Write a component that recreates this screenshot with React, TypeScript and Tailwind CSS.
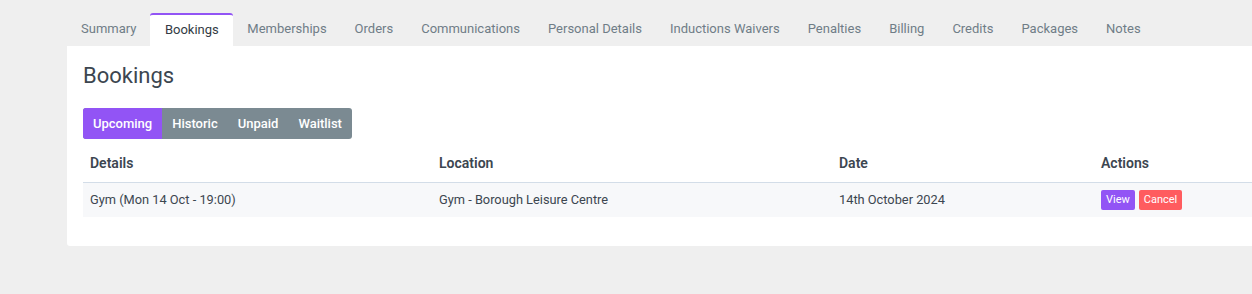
const tabs = [
  "Summary",
  "Bookings",
  "Memberships",
  "Orders",
  "Communications",
  "Personal Details",
  "Inductions Waivers",
  "Penalties",
  "Billing",
  "Credits",
  "Packages",
  "Notes",
];

const filters = ["Upcoming", "Historic", "Unpaid", "Waitlist"];

export default function App() {
  return (
    <div
      className="h-[294px] w-[1252px] overflow-hidden bg-[#efefef] pl-[67px]"
      style={{ fontFamily: "Roboto, 'Noto Sans', sans-serif" }}
    >
      <nav className="flex h-[46px] items-end pt-[13px]">
        {tabs.map((tab) =>
          tab === "Bookings" ? (
            <div
              key={tab}
              className="flex h-[33px] items-center rounded-t-[3px] border-t-2 border-[#9254f5] bg-white px-[14.5px] pb-[1px] text-[13px] text-[#333b44]"
            >
              {tab}
            </div>
          ) : (
            <div
              key={tab}
              className="flex h-[33px] items-center px-[14px] pb-[2px] text-[13px] text-[#6f7d87]"
            >
              {tab}
            </div>
          ),
        )}
      </nav>

      <section className="h-[200px] w-[1220px] rounded-bl-[3px] bg-white px-4 pt-[17px]">
        <h1 className="text-[22px] leading-[26px] text-[#3c4650]">Bookings</h1>

        <div className="mt-[19px] flex h-[31px] w-fit overflow-hidden rounded-[3px] bg-[#7b8a92]">
          {filters.map((filter) => (
            <button
              key={filter}
              className={
                filter === "Upcoming"
                  ? "bg-[#9254f5] px-[10px] text-[13px] font-medium text-white"
                  : "px-[10px] text-[13px] font-medium text-white"
              }
            >
              {filter}
            </button>
          ))}
        </div>

        <table className="mt-[9px] w-[1188px] border-collapse text-left">
          <thead>
            <tr className="h-[34px] border-b border-[#d3dde8]">
              <th className="w-[349px] px-[7px] pb-[3px] text-[14px] font-semibold text-[#3c4650]">Details</th>
              <th className="w-[400px] px-[7px] pb-[3px] text-[14px] font-semibold text-[#3c4650]">Location</th>
              <th className="w-[262px] px-[7px] pb-[3px] text-[14px] font-semibold text-[#3c4650]">Date</th>
              <th className="px-[7px] pb-[3px] text-[14px] font-semibold text-[#3c4650]">Actions</th>
            </tr>
          </thead>
          <tbody>
            <tr className="h-[35px] bg-[#f7f8fa] text-[12.8px] text-[#3c4650]">
              <td className="px-[7px]">Gym (Mon 14 Oct - 19:00)</td>
              <td className="px-[7px]">Gym - Borough Leisure Centre</td>
              <td className="px-[7px]">14th October 2024</td>
              <td className="px-[7px]">
                <div className="flex gap-[4px]">
                  <button className="h-[20px] rounded-[2px] bg-[#9254f5] px-[5px] text-[11px] text-white">
                    View
                  </button>
                  <button className="h-[20px] rounded-[2px] bg-[#ff5c5f] px-[5px] text-[11px] text-white">
                    Cancel
                  </button>
                </div>
              </td>
            </tr>
          </tbody>
        </table>
      </section>
    </div>
  );
}
